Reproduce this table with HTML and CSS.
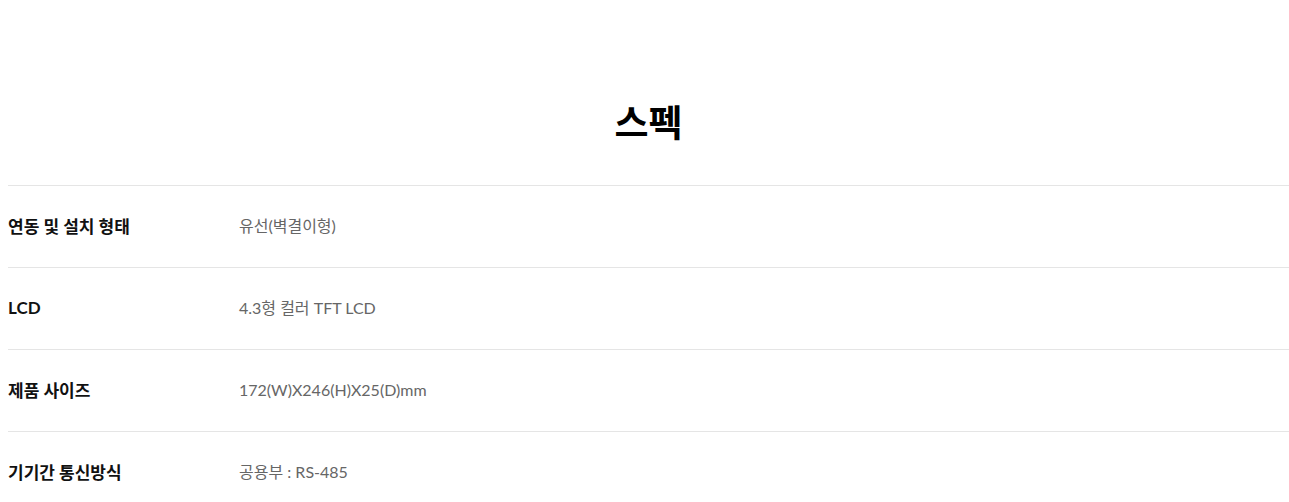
FILE: index.html
```html
<!DOCTYPE html>
<html lang="ko">
<head>
<meta charset="utf-8">
<link rel="stylesheet" href="styles.css">
</head>
<body>
<section class="spec">
  <h2 class="spec-title">스펙</h2>
  <dl class="spec-list">
    <div class="spec-row"><dt>연동 및 설치 형태</dt><dd>유선(벽결이형)</dd></div>
    <div class="spec-row"><dt>LCD</dt><dd>4.3형 컬러 TFT LCD</dd></div>
    <div class="spec-row"><dt>제품 사이즈</dt><dd>172(W)X246(H)X25(D)mm</dd></div>
    <div class="spec-row"><dt>기기간 통신방식</dt><dd>공용부 : RS-485</dd></div>
  </dl>
</section>
</body>
</html>
```
FILE: styles.css
```css
html, body {
  margin: 0;
  padding: 0;
  background: #fff;
}
body {
  padding-left: 8px;
  font-family: "Lato", "Noto Sans CJK KR", sans-serif;
  color: #000;
  overflow: hidden;
}
.spec-title {
  margin: 0;
  padding: 97px 0 40px;
  text-align: center;
  font-size: 37px;
  font-weight: 700;
  line-height: 48px;
  font-family: "Noto Sans CJK KR", sans-serif;
}
.spec-list {
  margin: 0;
}
.spec-row {
  display: flex;
  align-items: center;
  height: 82px;
  padding-bottom: 3px;
  border-top: 1px solid #e5e5e5;
  box-sizing: border-box;
}
.spec-row dt {
  width: 231px;
  font-size: 17px;
  font-weight: 700;
  color: #111;
}
.spec-row dd {
  margin: 0;
  font-size: 16px;
  color: #666;
}
```
